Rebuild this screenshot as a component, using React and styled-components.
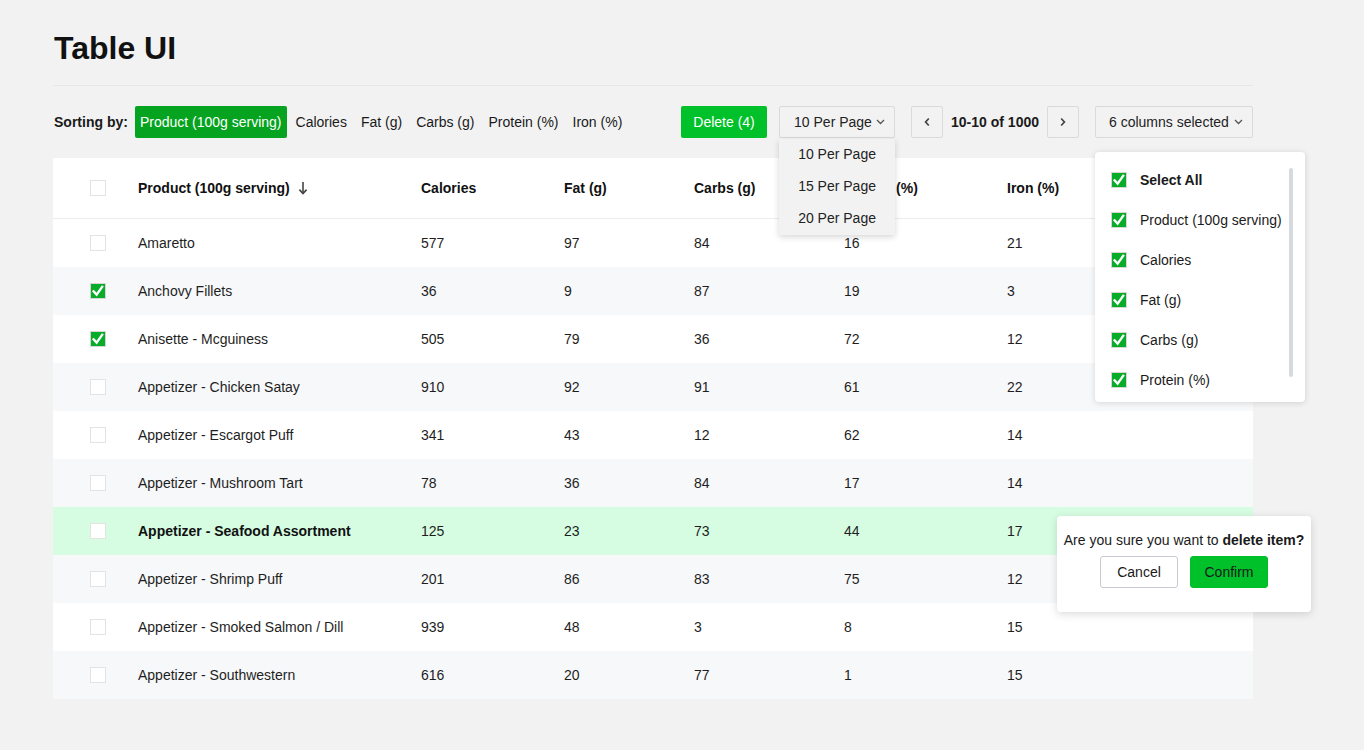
import React from "react";
import styled, { createGlobalStyle } from "styled-components";

const GlobalStyle = createGlobalStyle`
  html, body { margin: 0; padding: 0; }
  body {
    background: #f2f2f2;
    font-family: "Liberation Sans", Arial, sans-serif;
    color: #1a1a1a;
    font-size: 14px;
  }
  * { box-sizing: border-box; }
`;

const Page = styled.div`
  width: 1200px;
  margin-left: 53px;
  padding-top: 30px;
  padding-bottom: 51px;
`;

const Title = styled.h1`
  margin: 0;
  font-size: 32px;
  line-height: 37px;
  font-weight: bold;
  color: #111;
  padding-left: 1px;
`;

const Divider = styled.div`
  margin-top: 18px;
  height: 1px;
  background: #e7e7e7;
`;

const Toolbar = styled.div`
  margin-top: 20px;
  height: 32px;
  display: flex;
  align-items: center;
`;

const SortLabel = styled.span`
  font-weight: bold;
  font-size: 14px;
  margin-left: 1px;
  margin-right: 7px;
`;

const SortOptions = styled.div`
  display: flex;
  align-items: center;
  gap: 4px;
`;

const SortOption = styled.span`
  height: 32px;
  padding: 0 5px;
  display: flex;
  align-items: center;
  font-size: 14px;
  border-radius: 2px;
  background: ${(p) => (p.$active ? "#05a31f" : "transparent")};
  color: ${(p) => (p.$active ? "#fff" : "#1a1a1a")};
`;

const RightGroup = styled.div`
  margin-left: auto;
  display: flex;
  align-items: center;
`;

const DeleteButton = styled.button`
  height: 32px;
  width: 86px;
  padding: 0;
  border: none;
  border-radius: 2px;
  background: #00c12a;
  color: #fff;
  font: inherit;
  font-size: 14px;
  margin-right: 12px;
`;

const SelectWrap = styled.div`
  position: relative;
  margin-right: ${(p) => p.$mr || 0}px;
  margin-left: ${(p) => p.$ml || 0}px;
`;

const SelectButton = styled.div`
  width: ${(p) => p.$width}px;
  height: 32px;
  border: 1px solid #dadada;
  border-radius: 2px;
  display: flex;
  align-items: center;
  justify-content: space-between;
  padding: 0 9px 0 ${(p) => p.$pl}px;
  font-size: 14px;
  color: #222;
`;

const PerPageMenu = styled.div`
  position: absolute;
  top: calc(100% + 1px);
  left: 0;
  width: 100%;
  background: #f2f2f2;
  box-shadow: 0 2px 6px rgba(0, 0, 0, 0.16);
  z-index: 10;
`;

const PerPageItem = styled.div`
  height: 32px;
  display: flex;
  align-items: center;
  justify-content: center;
  font-size: 14px;
  color: #222;
  padding-bottom: 2px;
`;

const PagerButton = styled.div`
  width: 32px;
  height: 32px;
  border: 1px solid #dadada;
  border-radius: 2px;
  display: flex;
  align-items: center;
  justify-content: center;
`;

const PageCount = styled.span`
  font-weight: bold;
  font-size: 14px;
  margin: 0 8px 0 8px;
`;

const ColumnsMenu = styled.div`
  position: absolute;
  top: calc(100% + 14px);
  left: 0;
  width: 210px;
  height: 250px;
  background: #fff;
  border-radius: 4px;
  box-shadow: 0 1px 6px rgba(0, 0, 0, 0.14);
  overflow: hidden;
  padding-top: 8px;
  z-index: 10;
`;

const ColumnItem = styled.div`
  height: 40px;
  display: flex;
  align-items: center;
  gap: 13px;
  padding-left: 16px;
  font-size: 14px;
  font-weight: ${(p) => (p.$bold ? "bold" : "normal")};
  color: #1a1a1a;
`;

const ScrollThumb = styled.div`
  position: absolute;
  top: 16px;
  right: 12px;
  width: 4px;
  height: 209px;
  border-radius: 2px;
  background: #d6dae0;
`;

const TableWrap = styled.div`
  position: relative;
  margin-top: 20px;
  background: #fff;
`;

const COLS = "85px 283px 143px 130px 150px 163px 1fr";

const HeaderRow = styled.div`
  display: grid;
  grid-template-columns: ${COLS};
  height: 61px;
  align-items: center;
  border-bottom: 1px solid #ececec;
  font-weight: bold;
  font-size: 14px;
  color: #111;
`;

const Row = styled.div`
  display: grid;
  grid-template-columns: ${COLS};
  height: 48px;
  align-items: center;
  font-size: 14px;
  color: #1e1e1e;
  background: ${(p) =>
    p.$highlight ? "#d6fde2" : p.$striped ? "#f7f8fa" : "#fff"};
`;

const CheckCell = styled.div`
  padding-left: 37px;
  display: flex;
  align-items: center;
`;

const Cell = styled.div`
  display: flex;
  align-items: center;
  gap: 8px;
  white-space: nowrap;
  font-weight: ${(p) => (p.$bold ? "bold" : "inherit")};
  color: ${(p) => (p.$bold ? "#111" : "inherit")};
`;

const Box = styled.span`
  width: 16px;
  height: 16px;
  display: inline-flex;
  align-items: center;
  justify-content: center;
  flex: none;
  border: 1px solid ${(p) => (p.$checked ? "#d5d5d5" : "#e3e3e3")};
  background: ${(p) => (p.$checked ? "#07ad28" : "#fff")};
`;

const Popup = styled.div`
  position: absolute;
  top: 358px;
  left: 1004px;
  width: 254px;
  height: 96px;
  background: #fff;
  border-radius: 4px;
  box-shadow: 0 2px 8px rgba(0, 0, 0, 0.15);
  padding-top: 15px;
  z-index: 10;
  text-align: center;
`;

const PopupText = styled.div`
  font-size: 14px;
  line-height: 18px;
  color: #1a1a1a;
  white-space: nowrap;
  b { font-weight: bold; }
`;

const PopupActions = styled.div`
  margin-top: 7px;
  display: flex;
  justify-content: center;
  gap: 12px;
`;

const PopupButton = styled.button`
  width: 78px;
  height: 32px;
  border-radius: 3px;
  font: inherit;
  font-size: 14px;
  color: #1a1a1a;
  border: 1px solid ${(p) => (p.$primary ? "#00bd29" : "#c9c9d3")};
  background: ${(p) => (p.$primary ? "#00c12a" : "#fff")};
`;

const Checkbox = ({ checked }) => (
  <Box $checked={checked}>
    {checked && (
      <svg width="14" height="14" viewBox="0 0 14 14">
        <path
          d="M2.6 7.4 L5.6 10.6 L11.2 2.8"
          fill="none"
          stroke="#fff"
          strokeWidth="2.3"
          strokeLinecap="square"
        />
      </svg>
    )}
  </Box>
);

const ChevronDown = () => (
  <svg width="9" height="6" viewBox="0 0 9 6">
    <path d="M1 1 L4.5 4.5 L8 1" fill="none" stroke="#555" strokeWidth="1.3" />
  </svg>
);

const ChevronSide = ({ dir }) => (
  <svg width="6" height="10" viewBox="0 0 6 10">
    <path
      d={dir === "left" ? "M4.8 1.5 L1.6 5 L4.8 8.5" : "M1.2 1.5 L4.4 5 L1.2 8.5"}
      fill="none"
      stroke="#444"
      strokeWidth="1.7"
    />
  </svg>
);

const SortArrow = () => (
  <svg width="10" height="14" viewBox="0 0 10 14">
    <path d="M5 1 V12.5" stroke="#444" strokeWidth="1.6" />
    <path d="M1.4 8.6 L5 12.5 L8.6 8.6" fill="none" stroke="#444" strokeWidth="1.6" />
  </svg>
);

const rows = [
  ["Amaretto", 577, 97, 84, 16, 21, false],
  ["Anchovy Fillets", 36, 9, 87, 19, 3, true],
  ["Anisette - Mcguiness", 505, 79, 36, 72, 12, true],
  ["Appetizer - Chicken Satay", 910, 92, 91, 61, 22, false],
  ["Appetizer - Escargot Puff", 341, 43, 12, 62, 14, false],
  ["Appetizer - Mushroom Tart", 78, 36, 84, 17, 14, false],
  ["Appetizer - Seafood Assortment", 125, 23, 73, 44, 17, false],
  ["Appetizer - Shrimp Puff", 201, 86, 83, 75, 12, false],
  ["Appetizer - Smoked Salmon / Dill", 939, 48, 3, 8, 15, false],
  ["Appetizer - Southwestern", 616, 20, 77, 1, 15, false],
];

const sortOptions = [
  "Product (100g serving)",
  "Calories",
  "Fat (g)",
  "Carbs (g)",
  "Protein (%)",
  "Iron (%)",
];

export default function App() {
  return (
    <>
      <GlobalStyle />
      <Page>
        <Title>Table UI</Title>
        <Divider />
        <Toolbar>
          <SortLabel>Sorting by:</SortLabel>
          <SortOptions>
            {sortOptions.map((o, i) => (
              <SortOption key={o} $active={i === 0}>
                {o}
              </SortOption>
            ))}
          </SortOptions>
          <RightGroup>
            <DeleteButton>Delete (4)</DeleteButton>
            <SelectWrap $mr={16}>
              <SelectButton $width={116} $pl={14}>
                <span>10 Per Page</span>
                <ChevronDown />
              </SelectButton>
              <PerPageMenu>
                <PerPageItem>10 Per Page</PerPageItem>
                <PerPageItem>15 Per Page</PerPageItem>
                <PerPageItem>20 Per Page</PerPageItem>
              </PerPageMenu>
            </SelectWrap>
            <PagerButton>
              <ChevronSide dir="left" />
            </PagerButton>
            <PageCount>10-10 of 1000</PageCount>
            <PagerButton>
              <ChevronSide dir="right" />
            </PagerButton>
            <SelectWrap $ml={16}>
              <SelectButton $width={158} $pl={13}>
                <span>6 columns selected</span>
                <ChevronDown />
              </SelectButton>
              <ColumnsMenu>
                <ColumnItem $bold>
                  <Checkbox checked />
                  Select All
                </ColumnItem>
                {sortOptions.map((o) => (
                  <ColumnItem key={o}>
                    <Checkbox checked />
                    {o}
                  </ColumnItem>
                ))}
                <ScrollThumb />
              </ColumnsMenu>
            </SelectWrap>
          </RightGroup>
        </Toolbar>
        <TableWrap>
          <HeaderRow>
            <CheckCell>
              <Checkbox checked={false} />
            </CheckCell>
            <Cell>
              Product (100g serving) <SortArrow />
            </Cell>
            <Cell>Calories</Cell>
            <Cell>Fat (g)</Cell>
            <Cell>Carbs (g)</Cell>
            <Cell>Protein (%)</Cell>
            <Cell>Iron (%)</Cell>
          </HeaderRow>
          {rows.map((r, i) => (
            <Row key={r[0]} $striped={i % 2 === 1} $highlight={i === 6}>
              <CheckCell>
                <Checkbox checked={r[6]} />
              </CheckCell>
              <Cell $bold={i === 6}>{r[0]}</Cell>
              <Cell>{r[1]}</Cell>
              <Cell>{r[2]}</Cell>
              <Cell>{r[3]}</Cell>
              <Cell>{r[4]}</Cell>
              <Cell>{r[5]}</Cell>
            </Row>
          ))}
          <Popup>
            <PopupText>
              Are you sure you want to <b>delete item?</b>
            </PopupText>
            <PopupActions>
              <PopupButton>Cancel</PopupButton>
              <PopupButton $primary>Confirm</PopupButton>
            </PopupActions>
          </Popup>
        </TableWrap>
      </Page>
    </>
  );
}
